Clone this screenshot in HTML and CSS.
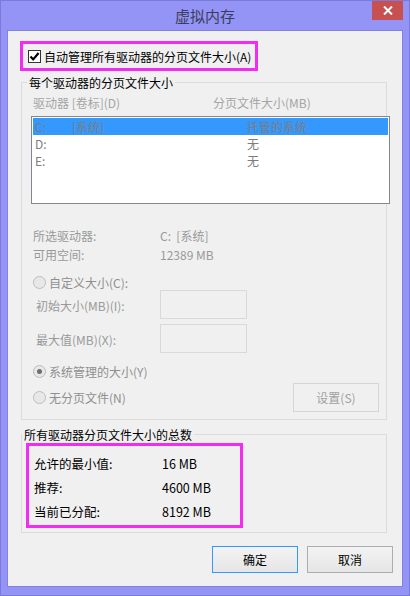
FILE: index.html
```html
<!DOCTYPE html>
<html lang="zh-CN">
  <head>
    <meta charset="UTF-8" />
    <title>虚拟内存</title>
    <link rel="stylesheet" href="styles.css">
  </head>
  <body>
    <div class="window">
      <div class="titlebar">
        <span></span>
        <span class="title">虚拟内存</span>
        <span class="close">
          <svg width="10" height="9" viewBox="0 0 10 9">
            <path d="M1 0.5 L9 8.5 M9 0.5 L1 8.5" stroke="#fff" stroke-width="2" />
          </svg>
        </span>
      </div>
      <div class="panel">
        <div class="highlight auto-box">
          <span class="checkbox">
            <svg width="11" height="11" viewBox="0 0 11 11">
              <path d="M1.5 5.5 L4.2 8.4 L9.6 2" fill="none" stroke="#000" stroke-width="2.2" />
            </svg>
          </span>
          <span>自动管理所有驱动器的分页文件大小(A)</span>
        </div>

        <div class="group paging">
          <div class="legend">每个驱动器的分页文件大小</div>
          <div class="list-head">
            <span>驱动器 [卷标](D)</span>
            <span>分页文件大小(MB)</span>
          </div>
          <div class="listbox">
            <div class="list-row selected"><span>C:</span><span>[系统]</span><span>托管的系统</span></div>
            <div class="list-row"><span>D:</span><span></span><span>无</span></div>
            <div class="list-row"><span>E:</span><span></span><span>无</span></div>
          </div>
          <div class="info">
            <span>所选驱动器:</span><span>C:&nbsp;&nbsp;[系统]</span>
            <span>可用空间:</span><span>12389 MB</span>
          </div>
          <div class="radio-row custom"><span class="radio"></span>自定义大小(C):</div>
          <div class="field-row first"><span class="field-label">初始大小(MB)(I):</span><span class="input"></span></div>
          <div class="field-row"><span class="field-label">最大值(MB)(X):</span><span class="input"></span></div>
          <div class="radio-row managed"><span class="radio on"></span>系统管理的大小(Y)</div>
          <div class="last-row">
            <div class="radio-row"><span class="radio"></span>无分页文件(N)</div>
            <span class="btn set">设置(S)</span>
          </div>
        </div>

        <div class="group totals">
          <div class="legend">所有驱动器分页文件大小的总数</div>
          <div class="highlight total-box">
            <span>允许的最小值:</span><span>16 MB</span>
            <span>推荐:</span><span>4600 MB</span>
            <span>当前已分配:</span><span>8192 MB</span>
          </div>
        </div>

        <div class="actions">
          <span class="btn default">确定</span>
          <span class="btn">取消</span>
        </div>
      </div>
    </div>
  </body>
</html>
```

FILE: styles.css
```css
body {
  margin: 0;
  font-family: "Noto Sans CJK SC", "Noto Sans", sans-serif;
  font-size: 12px;
  color: #000;
}

.window {
  width: 410px;
  height: 596px;
  box-sizing: border-box;
  background: #9494f6;
  border: 1px solid #7a7ad8;
}

.titlebar {
  height: 29px;
  display: grid;
  grid-template-columns: 1fr auto 1fr;
}

.title {
  align-self: center;
  font-size: 15px;
  line-height: 20px;
  color: #3c3c5a;
}

.close {
  justify-self: end;
  width: 31px;
  height: 19px;
  margin-right: 6px;
  background: #c75050;
  display: flex;
  align-items: center;
  justify-content: center;
}

.panel {
  margin: 0 6px;
  height: 555px;
  background: #f0f0f0;
  border: 1px solid #8282e4;
  overflow: hidden;
}

.highlight {
  border: 3px solid #f32cf2;
}

.auto-box {
  width: 232px;
  height: 24px;
  margin: 10px 0 0 12px;
  display: flex;
  align-items: center;
}

.checkbox {
  width: 11px;
  height: 11px;
  margin: 0 3px 0 5px;
  border: 1px solid #333;
  background: #fff;
}

.checkbox svg {
  display: block;
}

.group {
  width: 366px;
  margin-left: 13px;
  border: 1px solid #dcdcdc;
  padding: 0 0 0 9px;
  box-sizing: border-box;
}

.paging {
  margin-top: 11px;
  height: 338px;
}

.legend {
  display: table;
  margin: -9px 0 0 -4px;
  padding: 0 2px;
  line-height: 17px;
  background: #f0f0f0;
}

.list-head {
  margin-top: 4px;
  line-height: 16px;
  padding-left: 2px;
  display: grid;
  grid-template-columns: 180px 1fr;
  color: #a5a5a5;
}

.listbox {
  width: 359px;
  height: 88px;
  margin-top: 5px;
  box-sizing: border-box;
  border: 1px solid #828790;
  background: #fff;
  padding: 1px;
}

.list-row {
  height: 17px;
  line-height: 17px;
  padding-left: 2px;
  display: grid;
  grid-template-columns: 37px 175px 1fr;
  color: #7d7d7d;
}

.list-row.selected {
  background: #3399ff;
}

.info {
  margin-top: 22px;
  padding-left: 2px;
  display: grid;
  grid-template-columns: 127px 1fr;
  line-height: 19px;
  color: #999;
}

.radio-row {
  display: flex;
  align-items: center;
  height: 16px;
  margin-left: 2px;
  color: #8f8f8f;
}

.radio {
  width: 11px;
  height: 11px;
  margin-right: 3px;
  border: 1px solid #bcbcbc;
  border-radius: 50%;
  background: #e8e8e8;
  display: flex;
  align-items: center;
  justify-content: center;
}

.radio.on::after {
  content: "";
  width: 5px;
  height: 5px;
  border-radius: 50%;
  background: #6e6e6e;
}

.custom {
  margin-top: 10px;
}

.field-row {
  display: flex;
  align-items: center;
  margin-top: 5px;
  color: #999;
}

.field-row.first {
  margin-top: 0;
}

.field-label {
  width: 124px;
  padding-left: 5px;
  padding-top: 2px;
}

.input {
  width: 87px;
  height: 29px;
  box-sizing: border-box;
  border: 1px solid #d9d9d9;
}

.managed {
  margin-top: 10px;
}

.last-row {
  margin-top: 4px;
  height: 29px;
  display: flex;
  align-items: center;
  justify-content: space-between;
  padding-right: 7px;
}

.btn {
  height: 27px;
  box-sizing: border-box;
  border: 1px solid #adadad;
  background: linear-gradient(#f3f3f3, #e6e6e6);
  display: flex;
  align-items: center;
  justify-content: center;
}

.btn.set {
  width: 86px;
  height: 29px;
  border-color: #d5d5d5;
  background: #f0f0f0;
  color: #a0a0a0;
}

.totals {
  margin-top: 14px;
  height: 99px;
  padding-left: 4px;
}

.total-box {
  width: 206px;
  padding: 6px 0 1px 5px;
  display: grid;
  grid-template-columns: 128px 1fr;
  line-height: 24px;
  font-size: 12.5px;
}

.actions {
  margin-top: 13px;
  display: flex;
  justify-content: flex-end;
  gap: 9px;
  padding-right: 9px;
}

.actions .btn {
  width: 86px;
}

.btn.default {
  border-color: #3399ff;
}
```
